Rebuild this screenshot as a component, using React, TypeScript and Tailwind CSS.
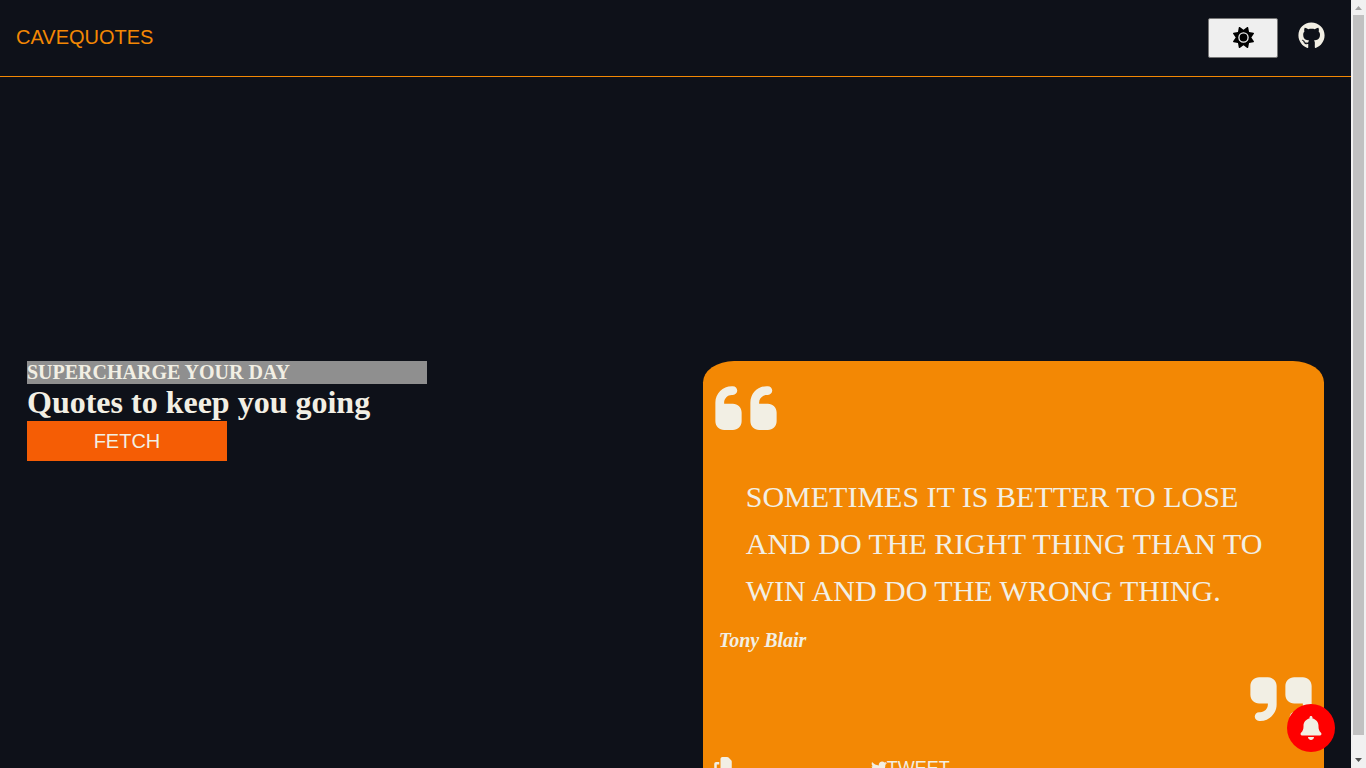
import { FaBell, FaCopy, FaGithub, FaQuoteLeft, FaQuoteRight, FaSun, FaTwitter } from "react-icons/fa6";

function Header() {
  return (
    <header className="flex h-[77px] shrink-0 items-center justify-between border-b border-[#f38804] pr-[26px] pl-4">
      <h1 className="pb-0.5 font-['Liberation_Sans',sans-serif] text-xl text-[#f38804]">CAVEQUOTES</h1>
      <div className="flex items-center gap-5">
        <button
          type="button"
          aria-label="Toggle theme"
          className="flex h-10 w-[70px] items-center justify-center rounded-xs border border-[#767676] bg-[#efefef] pb-0.5 text-black"
        >
          <FaSun className="size-[21px]" />
        </button>
        <a href="#github" aria-label="GitHub" className="pb-1.5 text-[#f2efe4]">
          <FaGithub className="size-[27px]" />
        </a>
      </div>
    </header>
  );
}

function Intro() {
  return (
    <section className="w-[400px]">
      <p className="bg-[#8f8f8f] text-xl leading-[23px] font-bold">SUPERCHARGE YOUR DAY</p>
      <h2 className="text-[32px] leading-[37px] font-bold">Quotes to keep you going</h2>
      <button type="button" className="h-10 w-[200px] bg-[#f55d05] font-['Liberation_Sans',sans-serif] text-xl">
        FETCH
      </button>
    </section>
  );
}

function QuoteCard() {
  return (
    <article className="w-[47.9%] rounded-[5%] bg-[#f38804] p-3">
      <FaQuoteLeft className="h-[70px] w-[62px]" />
      <blockquote className="mt-[30px] pr-4 pl-[31px] text-[30px] leading-[47px]">
        SOMETIMES IT IS BETTER TO LOSE
        <br />
        AND DO THE RIGHT THING THAN TO
        <br />
        WIN AND DO THE WRONG THING.
      </blockquote>
      <p className="mt-3.5 pl-1 text-xl leading-6 font-bold italic">Tony Blair</p>
      <FaQuoteRight className="mt-3 ml-auto h-[70px] w-[62px]" />
      <div className="-mx-0.5 mt-5 grid grid-cols-[158px_1fr] items-center font-['Liberation_Sans',sans-serif] text-lg leading-6">
        <button type="button" aria-label="Copy quote" className="justify-self-start">
          <FaCopy className="size-5" />
        </button>
        <a href="#tweet" className="flex items-center pt-0.5">
          <FaTwitter className="size-4" />
          TWEET
        </a>
      </div>
    </article>
  );
}

function ScrollRail() {
  return (
    <div aria-hidden="true" className="flex w-[15px] shrink-0 flex-col items-center bg-[#f1f1f1]">
      <svg viewBox="0 0 15 15" className="size-[15px] shrink-0 fill-[#a3a3a3]">
        <path d="M4 10L7.5 6L11 10Z" />
      </svg>
      <div className="w-[11px] grow bg-[#c1c1c1]" />
      <svg viewBox="0 0 15 15" className="mt-[18px] size-[15px] shrink-0 fill-[#505050]">
        <path d="M4 5L7.5 9L11 5Z" />
      </svg>
    </div>
  );
}

export default function App() {
  return (
    <div className="flex h-screen overflow-hidden bg-[#0e1119] font-['Liberation_Serif',serif] text-[#f2efe4]">
      <div className="flex min-w-0 grow flex-col">
        <Header />
        <main className="flex items-start justify-between px-[27px] pt-[284px]">
          <Intro />
          <QuoteCard />
        </main>
      </div>
      <ScrollRail />
      <button
        type="button"
        aria-label="Notifications"
        className="fixed right-[31px] bottom-4 flex size-12 items-center justify-center rounded-full bg-[#ff0000]"
      >
        <FaBell className="size-6" />
      </button>
    </div>
  );
}
